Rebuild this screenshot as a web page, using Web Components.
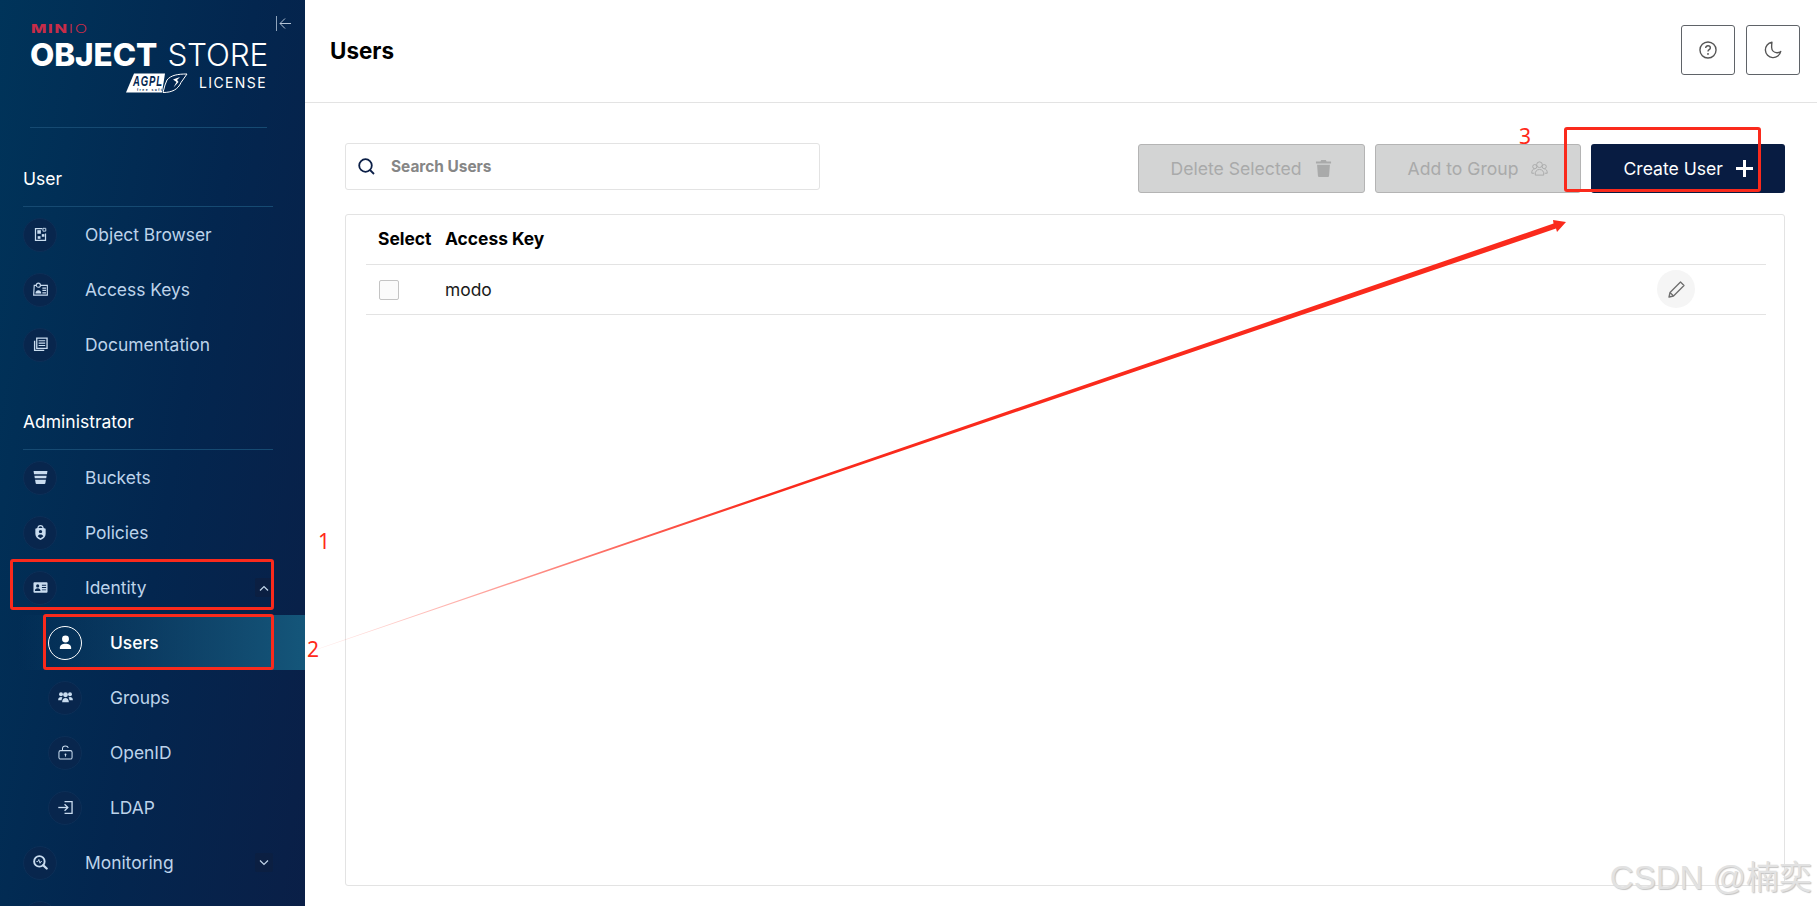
<!DOCTYPE html>
<html>
<head>
<meta charset="utf-8">
<title>Users</title>
<style>
  html, body { margin: 0; height: 100%; overflow: hidden; background: #fff; }
  body { font-family: Inter, "Liberation Sans", sans-serif; }
  #app { display: flex; height: 906px; position: relative; }
</style>
</head>
<body>
<div id="app">
  <app-sidebar>
    <side-logo></side-logo>

    <nav-section label="User"></nav-section>
    <nav-item>
      <svg slot="icon" viewBox="0 0 16 16"><path fill-rule="evenodd" fill="currentColor" d="M2 1h8v1.500H3.300v11.200h9.400V7H14v8H2zM3.300 2.500v11.200z"/><rect x="4.600" y="3.400" width="3.800" height="3.800" fill="currentColor"/><path fill="none" stroke="currentColor" d="M10.600 1.400h3v3h-3z"/><rect x="9.400" y="7.600" width="2.800" height="2.800" fill="currentColor"/><rect x="5" y="9.800" width="3" height="2.800" fill="currentColor"/></svg>
      Object Browser
    </nav-item>
    <nav-item>
      <svg slot="icon" viewBox="0 0 16 16"><path fill="none" stroke="currentColor" stroke-width="1.200" d="M3.300 3.600H1.300L.7 14h14.600V3.600H8.300"/><circle cx="5.700" cy="3.400" r="2.200" fill="none" stroke="currentColor" stroke-width="1.200"/><path fill="currentColor" d="M2.600 12.200c0-4.400 6.200-4.400 6.200 0z"/><path stroke="currentColor" stroke-width="1.400" d="M10 6.500h4M10 9h4M10 11.500h4"/></svg>
      Access Keys
    </nav-item>
    <nav-item>
      <svg slot="icon" viewBox="0 0 16 16"><path fill="currentColor" d="M1 4h1.400v9.600H12V15H1z"/><path fill="none" stroke="currentColor" stroke-width="1.400" d="M4 1.200h11v11H4z"/><path stroke="currentColor" stroke-width="1.200" d="M6 4h7M6 6.500h7M6 9h7"/></svg>
      Documentation
    </nav-item>

    <nav-section label="Administrator"></nav-section>
    <nav-item>
      <svg slot="icon" viewBox="0 0 16 16"><path fill="currentColor" d="M.6 1h14.800l-.5 3.400H1.100zM1.500 6h13l-.4 2.800H1.900zM2.200 10.400h11.600l-.6 3.400c-.1.7-.6 1.200-1.400 1.200H4.200c-.8 0-1.300-.5-1.400-1.200z"/></svg>
      Buckets
    </nav-item>
    <nav-item>
      <svg slot="icon" viewBox="0 0 16 16"><path fill="currentColor" fill-rule="evenodd" d="M8 0c2 0 3.300 1.300 3.400 3.200l2.100.8v5.600c0 3-2.600 5.200-5.500 6.400-2.900-1.200-5.500-3.400-5.500-6.400V4l2.100-.8C4.700 1.300 6 0 8 0zM8 1.400c-1.200 0-2 .8-2 1.800v.1h4v-.1c0-1-.8-1.800-2-1.800zM8 5.200a1.800 1.800 0 0 0-1.800 1.800c0 .7.4 1.300.9 1.600h1.800c.5-.3.900-.9.900-1.600A1.800 1.800 0 0 0 8 5.200zM5 12c.8.8 1.900 1.500 3 2 1.100-.5 2.200-1.200 3-2-.5-1.300-1.600-2-3-2s-2.500.7-3 2z"/></svg>
      Policies
    </nav-item>
    <nav-item chevron="up">
      <svg slot="icon" viewBox="0 0 16 16"><path fill="currentColor" fill-rule="evenodd" d="M1.500 2.500h13c.6 0 1 .4 1 1v9c0 .6-.4 1-1 1h-13c-.6 0-1-.4-1-1v-9c0-.6.4-1 1-1zM5 4.600a1.700 1.700 0 1 0 0 3.400 1.700 1.700 0 0 0 0-3.400zM2 11.600h6c0-1.800-1.200-2.900-3-2.900s-3 1.100-3 2.900zM9.500 5v1h4.500V5zm0 2.500v1h4.500v-1zm0 2.500v1h4.500v-1z"/></svg>
      Identity
    </nav-item>
    <nav-item sub active>
      <svg slot="icon" viewBox="0 0 16 16"><circle cx="8" cy="4.200" r="3.700" fill="currentColor"/><path fill="currentColor" d="M2 15v-1.600C2 10.600 4.600 9.200 8 9.200s6 1.400 6 4.200V15z"/></svg>
      Users
    </nav-item>
    <nav-item sub>
      <svg slot="icon" viewBox="0 0 16 16"><circle cx="8" cy="5" r="2.600" fill="currentColor"/><circle cx="3.200" cy="4.600" r="2.100" fill="currentColor"/><circle cx="12.800" cy="4.600" r="2.100" fill="currentColor"/><path fill="currentColor" d="M.2 10.400c0-2 1.300-3 3-3 .7 0 1.200.2 1.600.5-.6.7-1 1.600-1 2.900H.2zM15.800 10.400c0-2-1.300-3-3-3-.7 0-1.200.2-1.600.5.6.7 1 1.600 1 2.900h3.600zM4.400 13c0-3 1.600-4.600 3.600-4.600s3.600 1.600 3.600 4.600z"/></svg>
      Groups
    </nav-item>
    <nav-item sub>
      <svg slot="icon" viewBox="0 0 16 16"><rect x="1" y="6" width="14" height="9" rx="1.800" fill="none" stroke="currentColor" stroke-width="1.100"/><path fill="none" stroke="currentColor" stroke-width="1.100" d="M4.800 6V3.800C4.800 2 6.200 1 8 1c1.500 0 2.600.7 3 2"/><circle cx="8" cy="10" r="1" fill="currentColor"/><path stroke="currentColor" d="M8 10v2.400"/></svg>
      OpenID
    </nav-item>
    <nav-item sub>
      <svg slot="icon" viewBox="0 0 16 16"><path fill="none" stroke="currentColor" stroke-width="1.400" d="M7 1.700h8v12.600H7"/><path stroke="currentColor" stroke-width="1.400" d="M.3 8h10.200"/><path fill="none" stroke="currentColor" stroke-width="1.400" d="M7 4.500 10.500 8 7 11.500"/></svg>
      LDAP
    </nav-item>
    <nav-item chevron="down">
      <svg slot="icon" viewBox="0 0 16 16"><circle cx="6.800" cy="6.800" r="5.600" fill="none" stroke="currentColor" stroke-width="2"/><path fill="none" stroke="currentColor" stroke-width="1" d="M3.600 7h1.600l1-2.200 1.300 4 .8-1.800h1.200"/><path stroke="currentColor" stroke-width="2.400" stroke-linecap="round" d="M11 11l3.600 3.400"/></svg>
      Monitoring
    </nav-item>
    <nav-item></nav-item>
  </app-sidebar>

  <main-pane>
    <top-bar title="Users"></top-bar>
    <users-page></users-page>
  </main-pane>

  <note-layer></note-layer>
  <water-mark>CSDN @楠奕</water-mark>
</div>

<script>
  function define(tag, css, html) {
    customElements.define(tag, class extends HTMLElement {
      connectedCallback() {
        if (this.shadowRoot) return;
        const root = this.attachShadow({ mode: 'open' });
        root.innerHTML = `<style>${css}</style>` + (typeof html === 'function' ? html(this) : html);
      }
    });
  }

  define('app-sidebar', `
    :host { display: block; width: 305px; flex: none; height: 906px; overflow: hidden; color: #c3d6ea;
      background: linear-gradient(100deg, #00345a 0%, #03264f 55%, #0a1f47 100%); }
  `, `<slot></slot>`);

  define('side-logo', `
    :host { display: block; position: relative; height: 128px; box-sizing: border-box; padding: 0 38px 0 30px; }
    .brand { display: flex; flex-direction: column; height: 127px; border-bottom: 1px solid #164a72; }
    .minio { margin: 21px 0 0 1px; font-size: 11.700px; line-height: 16px; letter-spacing: 1.200px; color: #c72c48; transform-origin: left; transform: scaleX(1.400); white-space: nowrap; }
    .minio b { font-weight: 800; } .minio i { font-style: normal; font-weight: 300; }
    .title { display: flex; justify-content: space-between; font-size: 31.500px; line-height: 38px; margin: -1px -1px 0 0; color: #fff; white-space: nowrap; }
    .title b { font-weight: 800; letter-spacing: -.1px; } .title span { font-weight: 300; letter-spacing: -.2px; }
    .lic { align-self: flex-end; display: flex; align-items: center; gap: 11px; margin-top: -1px; color: #fff; font-size: 14px; line-height: 20px; letter-spacing: 1.400px; font-weight: 400; }
    .lic svg { display: block; width: 62px; height: 20px; }
    .collapse { position: absolute; left: 276px; top: 16px; width: 15px; height: 15px; color: #8ea3bb; }
  `, `
    <div class="brand">
      <div class="minio"><b>MIN</b><i>IO</i></div>
      <div class="title"><b>OBJECT</b><span>STORE</span></div>
      <div class="lic">
        <svg viewBox="0 0 62 20">
          <path d="M8 .5h31l-3 19H0z" fill="#fff"/>
          <text x="7" y="13" textLength="30" lengthAdjust="spacingAndGlyphs" font-family="Liberation Sans" font-style="italic" font-weight="700" font-size="15" fill="#03264f">AGPL</text>
          <text x="11" y="17.500" font-family="Liberation Sans" font-weight="700" font-size="3.500" fill="#03264f">free software</text>
          <path d="M37 19.500c9 0 15-3 18-10l6-8.500c-9 0-16 1-20 6l-2 5z" fill="#03264f" stroke="#fff" stroke-width="1"/>
          <path d="M47 6.500l7-2.500-3 3 1.500 2-5 5.500 3-5.500z" fill="#fff"/>
        </svg>
        <span>LICENSE</span>
      </div>
    </div>
    <svg class="collapse" viewBox="0 0 15 15"><path d="M.5 0v15" stroke="currentColor"/><path d="M15 7.500H4M9 2.500 4 7.500l5 5" fill="none" stroke="#b5c4d6"/></svg>
  `);

  define('nav-section', `
    :host { display: block; height: 78px; box-sizing: border-box; margin: 0 32px 0 23px; border-bottom: 1px solid #164a72;
      padding-top: 40px; font-size: 17.500px; line-height: 20px; color: #fff; font-weight: 400; }
    :host(:first-of-type) { height: 79px; padding-top: 41px; }
  `, el => `${el.getAttribute('label')}`);

  define('nav-item', `
    :host { display: flex; align-items: center; height: 55px; box-sizing: border-box; padding-left: 23px; padding-right: 32px; font-size: 17.400px; color: #bdd3ea; white-space: nowrap; }
    :host([sub]) { padding-left: 48px; }
    :host([active]) { color: #fff; font-weight: 500; background: linear-gradient(90deg, rgba(22,90,126,0) 6%, #14567a 100%); }
    .ic { width: 34px; height: 34px; flex: none; box-sizing: border-box; border-radius: 50%; background: #08264d; border: 1px solid #0c2f57; display: flex; align-items: center; justify-content: center; color: #c9dcef; margin-right: 28px; }
    :host([active]) .ic { background: transparent; border-color: #fff; color: #fff; }
    ::slotted(svg) { width: 15px; height: 15px; display: block; }
    .label { flex: 1; }
    .chev { width: 18px; height: 19px; background: #0b1f42; border-radius: 2px; display: flex; align-items: center; justify-content: center; color: #c3d6ea; }
    .chev svg { width: 10px; height: 6px; display: block; }
  `, el => {
    const dir = el.getAttribute('chevron');
    const chev = !dir ? '' : `<div class="chev"><svg viewBox="0 0 10 6"><path fill="none" stroke="currentColor" stroke-width="1.200" d="${dir === 'up' ? 'M1 5.500 5 1.500l4 4' : 'M1 .5l4 4 4-4'}"/></svg></div>`;
    return `<div class="ic"><slot name="icon"></slot></div><div class="label"><slot></slot></div>${chev}`;
  });

  define('main-pane', `
    :host { display: flex; flex-direction: column; flex: 1; min-width: 0; height: 906px; }
  `, `<slot></slot>`);

  define('top-bar', `
    :host { display: flex; align-items: center; justify-content: space-between; height: 103px; box-sizing: border-box; border-bottom: 1px solid #e3e3e3; padding: 0 17px 2px 25px; }
    h1 { margin: 2px 0 0; font-size: 22.400px; line-height: 28px; font-weight: 700; color: #000; }
    .btns { display: flex; gap: 11px; }
    button { width: 54px; height: 50px; padding: 0; display: flex; align-items: center; justify-content: center; background: #fff; border: 1px solid #5f6368; border-radius: 3px; color: #555; }
    svg { width: 18px; height: 18px; display: block; }
  `, el => `
    <h1>${el.getAttribute('title')}</h1>
    <div class="btns">
      <button><svg viewBox="0 0 17 17"><circle cx="8.500" cy="8.500" r="7.600" fill="none" stroke="currentColor" stroke-width="1.300"/><path d="M6.300 6.600c0-1.300 1-2.100 2.200-2.100s2.200.8 2.200 2c0 1.700-2.200 1.600-2.200 3.300" fill="none" stroke="currentColor" stroke-width="1.300"/><circle cx="8.500" cy="12.200" r=".9" fill="currentColor"/></svg></button>
      <button><svg viewBox="0 0 17 17"><path d="M7.500 1.200a7.300 7.300 0 1 0 8.300 8.600c-1 1-2.300 1.400-3.600 1.300-2.900-.2-5-2.400-5-5.200 0-1.800.1-3.200.3-4.700z" fill="none" stroke="currentColor" stroke-width="1.300" stroke-linejoin="round"/></svg></button>
    </div>
  `);

  define('users-page', `
    :host { display: flex; flex-direction: column; flex: 1; min-height: 0; padding: 40px 32px 20px 40px; gap: 21px; }
    .tools { display: flex; justify-content: space-between; align-items: flex-start; height: 50px; }
    .acts { display: flex; gap: 10px; margin-top: 1px; }
  `, `
    <div class="tools">
      <search-box>Search Users</search-box>
      <div class="acts">
        <act-button disabled>Delete Selected<svg slot="icon" viewBox="0 0 16 18"><path fill="currentColor" d="M5.500 0h5l.7 1.500H16v2.200H0V1.500h4.800zM1.200 5h13.600l-.9 11.600c-.1.8-.7 1.400-1.500 1.400H3.600c-.8 0-1.400-.6-1.500-1.400z"/></svg></act-button>
        <act-button disabled>Add to Group<svg slot="icon" viewBox="0 0 18 18"><g fill="none" stroke="currentColor"><circle cx="9" cy="5" r="3"/><circle cx="4" cy="7" r="2.200"/><circle cx="14" cy="7" r="2.200"/><path d="M4.500 16c-.4-4 1.600-6 4.500-6s4.900 2 4.500 6zM3.500 14H.8c0-3 1-4.500 3-4.500M14.500 14h2.700c0-3-1-4.500-3-4.500"/></g></svg></act-button>
        <act-button>Create User<svg slot="icon" viewBox="0 0 17 17"><path d="M8.500 0v17M0 8.500h17" stroke="currentColor" stroke-width="3"/></svg></act-button>
      </div>
    </div>
    <users-table></users-table>
  `);

  define('search-box', `
    :host { display: flex; align-items: center; width: 475px; height: 47px; box-sizing: border-box; border: 1px solid #e3e3e3; border-radius: 3px; padding-left: 12px; font-size: 15.400px; font-weight: 700; color: #868686; }
    svg { width: 17px; height: 17px; margin-right: 16px; flex: none; }
  `, `<svg viewBox="0 0 17 17"><circle cx="7.500" cy="7.500" r="6.300" fill="none" stroke="#0b1f47" stroke-width="1.800"/><path d="M12 12l4 4" stroke="#0b1f47" stroke-width="1.800"/></svg><slot></slot>`);

  define('act-button', `
    :host { display: flex; align-items: center; height: 49px; box-sizing: border-box; padding: 0 32px; gap: 13px; border-radius: 3px; background: #081c42; color: #fff; font-size: 17.600px; white-space: nowrap; }
    :host([disabled]) { background: #d3d4d4; border: 1px solid #b4b4b4; color: #a9aaaa; }
    ::slotted(svg) { width: 17px; height: 17px; display: block; flex: none; }
  `, `<slot></slot><slot name="icon"></slot>`);

  define('users-table', `
    :host { display: block; flex: 1; border: 1px solid #e3e3e3; border-radius: 3px; padding: 0 18px 0 20px; color: #000; font-size: 17.400px; }
    .row { display: grid; grid-template-columns: 67px 1fr 109px; align-items: center; padding-left: 12px; border-bottom: 1px solid #e3e3e3; box-sizing: border-box; }
    .head { height: 50px; font-weight: 700; padding-bottom: 2px; }
    .body { height: 50px; color: #1a1a1a; padding-bottom: 1px; }
    .check { width: 20px; height: 20px; box-sizing: border-box; border: 1px solid #c4c4c4; border-radius: 2px; background: #fbfbfb; margin: 2px 0 0 1px; }
    .edit { width: 38px; height: 38px; border-radius: 50%; background: #f5f5f5; display: flex; align-items: center; justify-content: center; color: #6e6e6e; }
    .edit svg { width: 17px; height: 17px; display: block; }
  `, `
    <div class="row head"><div>Select</div><div>Access Key</div><div></div></div>
    <div class="row body">
      <div class="check"></div>
      <div>modo</div>
      <div class="edit"><svg viewBox="0 0 17 17"><path d="M1 16l1-4.500L12.500 1 16 4.500 5.500 15zM2 11.500 5.500 15" fill="none" stroke="currentColor" stroke-width="1.300" stroke-linejoin="round"/></svg></div>
    </div>
  `);

  // red marks drawn on top of the screenshot, free canvas
  define('note-layer', `
    :host { position: absolute; inset: 0; display: block; pointer-events: none; color: #ff2a1a; font-family: "Noto Sans", sans-serif; }
    .box { position: absolute; box-sizing: border-box; border: 3px solid #fa2a1c; border-radius: 3px; }
    .num { position: absolute; font-size: 21px; line-height: 24px; font-weight: 400; }
    svg { position: absolute; left: 0; top: 0; }
  `, `
    <div class="box" style="left:10px;top:559px;width:264px;height:51px"></div>
    <div class="box" style="left:43px;top:614px;width:231px;height:56px"></div>
    <div class="box" style="left:1564px;top:127px;width:197px;height:65px"></div>
    <div class="num" style="left:318px;top:529px">1</div>
    <div class="num" style="left:307px;top:637px">2</div>
    <div class="num" style="left:1519px;top:124px">3</div>
    <svg width="1817" height="906" viewBox="0 0 1817 906">
      <defs><linearGradient id="fade" gradientUnits="userSpaceOnUse" x1="318" y1="649" x2="760" y2="498"><stop offset="0" stop-color="#ff2a1a" stop-opacity=".08"/><stop offset="1" stop-color="#fa2a1c"/></linearGradient></defs>
      <polygon fill="url(#fade)" points="318,648.700 1553.500,223.500 1553,220 1566,222 1557,232 1556,228.500 318,649.300"/>
    </svg>
  `);

  define('water-mark', `
    :host { position: absolute; right: 5px; bottom: 8px; display: block; font-family: "Liberation Sans", "Noto Sans CJK SC", sans-serif; font-size: 33px; line-height: 40px; color: #e2e2e2; text-shadow: 1px 1px 1px #c4c4c4; white-space: nowrap; }
  `, `<slot></slot>`);
</script>
</body>
</html>
